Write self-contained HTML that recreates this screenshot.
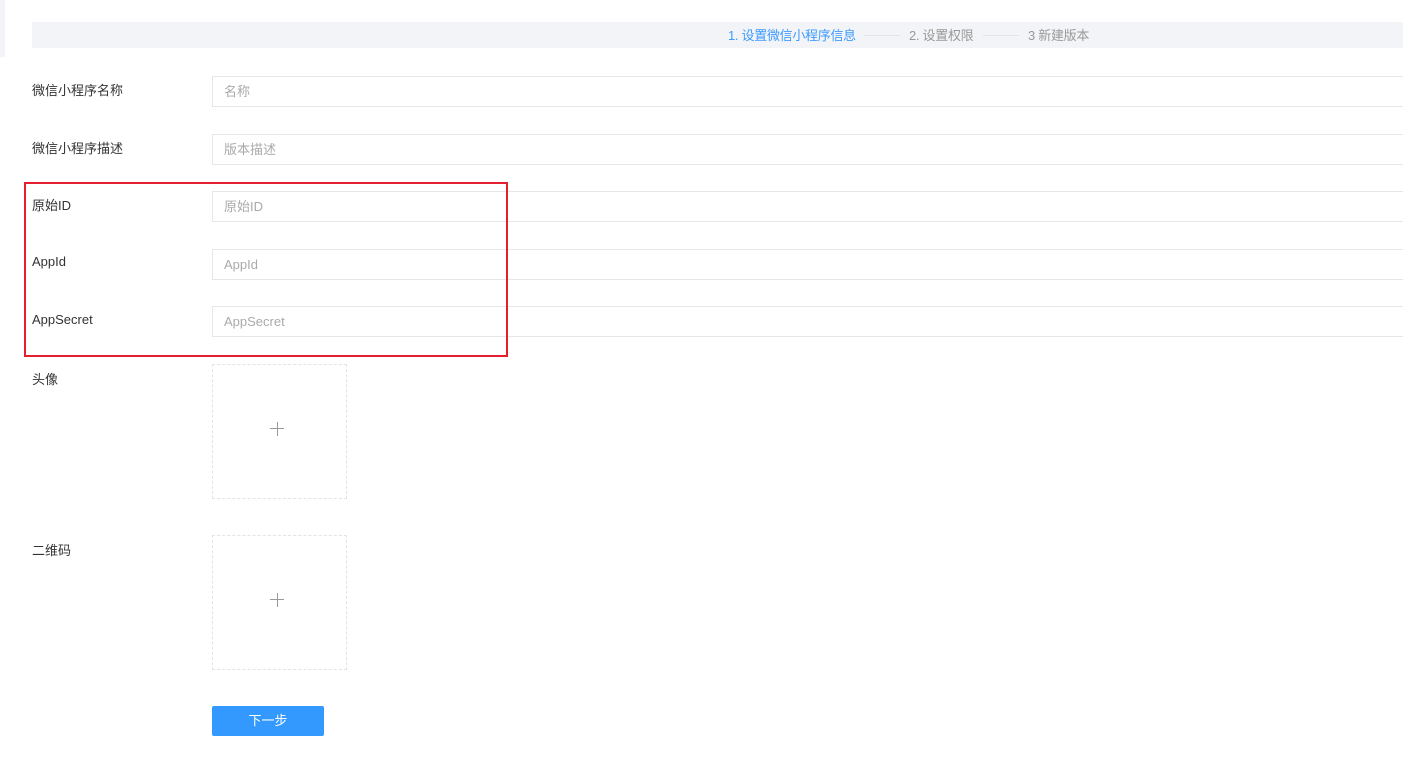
<!DOCTYPE html><html><head><style>
body{margin:0;width:1403px;height:765px;background:#fff;font-family:"Liberation Sans","Noto Sans CJK SC",sans-serif;font-size:13px;color:#333;position:relative;overflow:hidden}
.a{position:absolute}
.bar{left:32px;top:22px;width:1371px;height:26px;background:#f3f4f7}
.step{top:25px;font-size:13px;color:#999;letter-spacing:-0.3px}
.ln{top:35px;height:1px;background:#e3e4e8}
.lab{left:32px;font-size:13px;color:#333}
.inp{left:212px;width:1200px;border:1px solid #e6e6e6;box-sizing:border-box;height:31px;color:#aaa;font-size:13px;line-height:29px;padding-left:11px}
.up{left:212px;width:135px;height:135px;border:1px dashed #e3e3e3;box-sizing:border-box}
.up:before{content:"";position:absolute;left:57px;top:63px;width:14px;height:1px;background:#999}
.up:after{content:"";position:absolute;left:64px;top:57px;width:1px;height:14px;background:#999}
</style></head><body>
<div class="a" style="left:0;top:0;width:5px;height:57px;background:#f3f4f7"></div>
<div class="a bar"></div>
<div class="a step" style="left:728px;color:#3d9bff">1. 设置微信小程序信息</div>
<div class="a ln" style="left:864px;width:36px"></div>
<div class="a step" style="left:909px">2. 设置权限</div>
<div class="a ln" style="left:983px;width:36px"></div>
<div class="a step" style="left:1028px">3 新建版本</div>
<div class="a lab" style="top:80px">微信小程序名称</div><div class="a inp" style="top:76px">名称</div>
<div class="a lab" style="top:138px">微信小程序描述</div><div class="a inp" style="top:134px">版本描述</div>
<div class="a lab" style="top:195px">原始ID</div><div class="a inp" style="top:191px">原始ID</div>
<div class="a lab" style="top:254px">AppId</div><div class="a inp" style="top:249px">AppId</div>
<div class="a lab" style="top:312px">AppSecret</div><div class="a inp" style="top:306px">AppSecret</div>
<div class="a" style="left:24px;top:182px;width:480px;height:171px;border:2px solid #e5202e"></div>
<div class="a lab" style="top:369px">头像</div><div class="a up" style="top:364px"></div>
<div class="a lab" style="top:540px">二维码</div><div class="a up" style="top:535px"></div>
<div class="a" style="left:212px;top:706px;width:112px;height:30px;background:#3399ff;border-radius:2px;color:#fff;text-align:center;line-height:30px;font-size:13px">下一步</div>
</body></html>
